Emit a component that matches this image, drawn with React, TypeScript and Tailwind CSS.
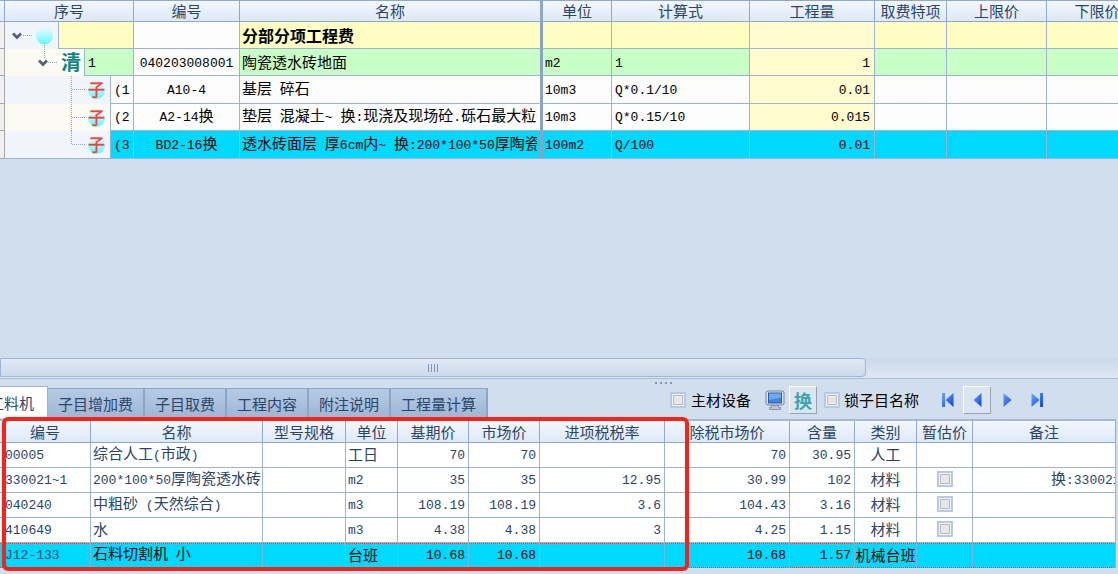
import React from 'react';

// ASCII runs are set in a narrower mono face so they stay half the width of the Chinese glyphs
const Txt: React.FC<{ children: string }> = ({ children }) => (
  <>
    {children.split(/([\x20-\x7e]+)/).map((part, i) =>
      i % 2 ? (
        <span key={i} className="font-['Liberation_Mono',monospace] text-[13px]">{part}</span>
      ) : (
        part
      )
    )}
  </>
);

const line = 'border-[#9db3d3]';
const headCell =
  'border-r border-b border-[#8ea9cb] bg-linear-to-b from-[#f3f7fd] to-[#dde9f7] p-0 text-center font-normal text-[#2b4568] overflow-hidden';

const items = [
  { level: 0, no: '', code: '', name: '分部分项工程费', unit: '', formula: '', qty: '' },
  { level: 1, no: '1', code: '040203008001', name: '陶瓷透水砖地面', unit: 'm2', formula: '1', qty: '1' },
  { level: 2, no: '(1', code: 'A10-4', name: '基层 碎石', unit: '10m3', formula: 'Q*0.1/10', qty: '0.01' },
  { level: 2, no: '(2', code: 'A2-14换', name: '垫层 混凝土~ 换:现浇及现场砼.砾石最大粒径', unit: '10m3', formula: 'Q*0.15/10', qty: '0.015' },
  { level: 2, no: '(3', code: 'BD2-16换', name: '透水砖面层 厚6cm内~ 换:200*100*50厚陶瓷透', unit: '100m2', formula: 'Q/100', qty: '0.01', selected: true },
];

const Chevron: React.FC<{ x: number }> = ({ x }) => (
  <path d={`M${x} 11.5l4 4 4-4`} fill="none" stroke="#52617d" strokeWidth="2.8" />
);

const TreeNode: React.FC<{ level: number; last: boolean }> = ({ level, last }) => {
  if (level === 0) {
    return (
      <svg width="53" height="27" className="block overflow-visible">
        <defs>
          <linearGradient id="ball" x1="0" y1="0" x2="0" y2="1">
            <stop offset="0" stopColor="#e9fcff" />
            <stop offset="0.45" stopColor="#adfbff" />
            <stop offset="1" stopColor="#5ff6fb" />
          </linearGradient>
        </defs>
        <Chevron x={8} />
        <path d="M18 13.5h10" stroke="#8fa3c2" strokeDasharray="1 1" />
        <circle cx="39.5" cy="14" r="8.5" fill="url(#ball)" />
      </svg>
    );
  }
  if (level === 1) {
    return (
      <svg width="79" height="27" className="block overflow-visible">
        <path d="M39.5 -4v14M43 13.5h10" stroke="#8fa3c2" strokeDasharray="1 1" fill="none" />
        <Chevron x={34} />
        <text x="56" y="21" fontSize="20" fontWeight="bold" fill="#0b8585" fontFamily="'Noto Sans CJK SC', sans-serif">清</text>
      </svg>
    );
  }
  return (
    <svg width="105" height="27" className="block overflow-visible">
      <path d={last ? 'M66.5 0v13.5M67 13.5h13' : 'M66.5 0v27M67 13.5h13'} stroke="#8fa3c2" strokeDasharray="1 1" fill="none" />
      <circle cx="91.5" cy="14.5" r="8.5" fill="url(#ball)" />
      <text x="83" y="20" fontSize="17" fill="#f5403a" stroke="#f5403a" strokeWidth="0.4" fontFamily="'Noto Sans CJK SC', sans-serif">子</text>
    </svg>
  );
};

const rowColor = (item: (typeof items)[number]) => {
  if (item.selected) return 'bg-[#00d9ff]';
  if (item.level === 0) return 'bg-[#fffec2]';
  if (item.level === 1) return 'bg-[#c9ffc6]';
  return 'bg-[#fcfcfc]';
};

const ItemTable: React.FC = () => (
  <table className="h-[158px] w-full min-w-[1148px] table-fixed border-separate border-spacing-0 whitespace-pre text-black">
    <colgroup>
      <col className="w-[5px]" />
      <col className="w-[54px]" />
      <col className="w-[26px]" />
      <col className="w-[26px]" />
      <col className="w-[23px]" />
      <col className="w-[106px]" />
      <col className="w-[303px]" />
      <col className="w-[69px]" />
      <col className="w-[138px]" />
      <col className="w-[125px]" />
      <col className="w-[72px]" />
      <col className="w-[100px]" />
      <col />
    </colgroup>
    <thead>
      <tr className="h-[21px]">
        <th className={headCell}></th>
        <th colSpan={4} className={headCell}>序号</th>
        <th className={headCell}>编号</th>
        <th className={`${headCell} border-r-[3px]`}>名称</th>
        <th className={headCell}>单位</th>
        <th className={headCell}>计算式</th>
        <th className={headCell}>工程量</th>
        <th className={headCell}>取费特项</th>
        <th className={headCell}>上限价</th>
        <th className={headCell}>下限价</th>
      </tr>
    </thead>
    <tbody>
      {items.map((item, index) => {
        const bg = rowColor(item);
        const last = index === items.length - 1;
        const cell = `border-r border-b ${line} p-0 overflow-hidden`;
        return (
          <tr key={index}>
            <td className="border-r border-b border-[#a8a8a8] bg-[#f0f0f0] p-0"></td>
            <td
              colSpan={item.level + 1}
              className={`border-r p-0 ${line} ${last ? 'border-b' : ''} ${index % 2 ? 'bg-[#fcfbf3]' : 'bg-[#f1f5fb]'}`}
            >
              <TreeNode level={item.level} last={last} />
            </td>
            <td colSpan={3 - item.level} className={`${cell} ${bg} pl-[3px]`}><Txt>{item.no}</Txt></td>
            <td className={`${cell} text-center ${item.selected ? bg : 'bg-[#fcfcfc]'}`}><Txt>{item.code}</Txt></td>
            <td className={`${cell} ${bg} border-r-[3px] border-r-[#8aa2c3] pr-[3px] pl-0.5 ${item.level === 0 ? 'text-[16px] font-bold' : ''}`}>
              <div className="overflow-hidden"><Txt>{item.name}</Txt></div>
            </td>
            <td className={`${cell} ${bg} pl-0.5`}><Txt>{item.unit}</Txt></td>
            <td className={`${cell} ${bg} pl-[3px]`}><Txt>{item.formula}</Txt></td>
            <td className={`${cell} pr-1 text-right ${item.selected ? bg : 'bg-[#fffdd0]'}`}><Txt>{item.qty}</Txt></td>
            <td className={`${cell} ${bg}`}></td>
            <td className={`${cell} ${bg}`}></td>
            <td className={`${cell} ${bg}`}></td>
          </tr>
        );
      })}
    </tbody>
  </table>
);

const tabs = ['子目增加费', '子目取费', '工程内容', '附注说明', '工程量计算'];

const checkbox =
  'size-4 shrink-0 appearance-none border-2 border-[#b4cae8] bg-[#e6e7e8] shadow-[inset_0_0_0_1px_#f4f4f4,inset_0_0_0_2px_#b9bbbf]';
const raised = 'flex size-7 items-center justify-center border border-t-white border-l-white border-r-[#98a4b5] border-b-[#98a4b5] bg-[#dbe5f1]';

const BlueGradient: React.FC = () => (
  <svg width="0" height="0" className="absolute">
    <defs>
      <linearGradient id="blue" x1="0" y1="0" x2="1" y2="1">
        <stop offset="0" stopColor="#6ea6ff" />
        <stop offset="1" stopColor="#0b45d8" />
      </linearGradient>
    </defs>
  </svg>
);

const Toolbar: React.FC = () => (
  <div className="ml-[182px] flex h-7 shrink-0 items-center text-black">
    <BlueGradient />
    <label className="flex items-center gap-[5px]">
      <input type="checkbox" className={checkbox} />
      主材设备
    </label>
    <button aria-label="显示" className="ml-3 mr-0.5 flex w-6 justify-center">
      <svg width="20" height="20" viewBox="0 0 20 20">
        <rect x="1" y="1" width="18" height="14" rx="2" fill="#dfe3ea" stroke="#7b8698" />
        <rect x="3.5" y="3" width="13" height="10" fill="#3f86e0" stroke="#2c58a8" />
        <path d="M4 3.5h12v4L4 10z" fill="#8fc2f7" opacity="0.6" />
        <path d="M6.500 15.500h7v2h2v2h-11v-2h2z" fill="#bcc3cf" stroke="#7b8698" strokeWidth="0.8" />
      </svg>
    </button>
    <button className={`${raised} text-[18px] font-bold text-[#3aa5ae]`}>换</button>
    <label className="ml-[7px] flex items-center gap-1">
      <input type="checkbox" className={checkbox} />
      锁子目名称
    </label>
    <div className="ml-[14px] flex items-center">
      <button aria-label="第一条" className="flex size-7 items-center justify-center">
        <svg width="13" height="16"><path d="M1 1h3v14H1zM12.500 1v14L4.500 8z" fill="url(#blue)" /></svg>
      </button>
      <button aria-label="上一条" className={`${raised} ml-0.5`}>
        <svg width="9" height="14"><path d="M8.500 0v14L0.500 7z" fill="url(#blue)" /></svg>
      </button>
      <button aria-label="下一条" className="ml-0.5 flex size-7 items-center justify-center">
        <svg width="9" height="14"><path d="M0.500 0v14L8.500 7z" fill="url(#blue)" /></svg>
      </button>
      <button aria-label="最后一条" className="ml-0.5 flex size-7 items-center justify-center">
        <svg width="13" height="16"><path d="M9 1h3v14H9zM0.500 1v14L8.500 8z" fill="url(#blue)" /></svg>
      </button>
    </div>
  </div>
);

const materials = [
  { code: '00005', name: '综合人工(市政)', unit: '工日', base: '70', market: '70', tax: '', net: '70', amount: '30.95', kind: '人工', note: '' },
  { code: '330021~1', name: '200*100*50厚陶瓷透水砖', unit: 'm2', base: '35', market: '35', tax: '12.95', net: '30.99', amount: '102', kind: '材料', estimate: true, note: '换:330021' },
  { code: '040240', name: '中粗砂 (天然综合)', unit: 'm3', base: '108.19', market: '108.19', tax: '3.6', net: '104.43', amount: '3.16', kind: '材料', estimate: true, note: '' },
  { code: '410649', name: '水', unit: 'm3', base: '4.38', market: '4.38', tax: '3', net: '4.25', amount: '1.15', kind: '材料', estimate: true, note: '' },
  { code: 'J12-133', name: '石料切割机 小', unit: '台班', base: '10.68', market: '10.68', tax: '', net: '10.68', amount: '1.57', kind: '机械台班', note: '', selected: true },
];

// focused row: cyan with a dotted red edge above and below
const focused =
  '[background:repeating-linear-gradient(90deg,#e8402f_0_1px,#7fb4d6_1px_2px)_top/100%_1px_no-repeat,repeating-linear-gradient(90deg,#e8402f_0_1px,#7fb4d6_1px_2px)_bottom/100%_1px_no-repeat,#00d9ff]';

const MaterialTable: React.FC = () => (
  <table className="w-full table-fixed border-separate border-spacing-0 whitespace-pre border-t-2 border-[#a3b8d2] text-[#2b4568]">
    <colgroup>
      <col className="w-[91px]" />
      <col className="w-[172px]" />
      <col className="w-[83px]" />
      <col className="w-[52px]" />
      <col className="w-[71px]" />
      <col className="w-[71px]" />
      <col className="w-[125px]" />
      <col className="w-[125px]" />
      <col className="w-[65px]" />
      <col className="w-[62px]" />
      <col className="w-[56px]" />
      <col />
    </colgroup>
    <thead>
      <tr className="h-[22px]">
        {['编号', '名称', '型号规格', '单位', '基期价', '市场价', '进项税税率', '除税市场价', '含量', '类别', '暂估价', '备注'].map((title) => (
          <th key={title} className={headCell}>{title}</th>
        ))}
      </tr>
    </thead>
    <tbody className="leading-[18px]">
      {materials.map((m) => {
        const cell = m.selected
          ? `h-[25px] overflow-hidden border-r border-[#7fb4d6] p-0 pb-0.5 text-black ${focused}`
          : 'h-[25px] overflow-hidden border-r border-b border-[#9db3d3] bg-white p-0 pb-0.5';
        return (
          <tr key={m.code}>
            <td className={`${cell} pl-[5px]`}>
              <span className="text-[#2b4568]"><Txt>{m.code}</Txt></span>
            </td>
            <td className={`${cell} pl-0.5`}><Txt>{m.name}</Txt></td>
            <td className={cell}></td>
            <td className={`${cell} pl-0.5`}><Txt>{m.unit}</Txt></td>
            <td className={`${cell} pr-[3px] text-right`}><Txt>{m.base}</Txt></td>
            <td className={`${cell} pr-[3px] text-right`}><Txt>{m.market}</Txt></td>
            <td className={`${cell} pr-[3px] text-right`}><Txt>{m.tax}</Txt></td>
            <td className={`${cell} pr-[3px] text-right`}><Txt>{m.net}</Txt></td>
            <td className={`${cell} pr-[3px] text-right`}><Txt>{m.amount}</Txt></td>
            <td className={`${cell} text-center`}>{m.kind}</td>
            <td className={cell}>
              {m.estimate && <input type="checkbox" aria-label="暂估价" className={`${checkbox} mx-auto block`} />}
            </td>
            <td className={`${cell} pl-[78px]`}><Txt>{m.note}</Txt></td>
          </tr>
        );
      })}
    </tbody>
  </table>
);

const App: React.FC = () => {
  return (
    <div className="flex min-h-screen flex-col overflow-hidden bg-[#d1deee] font-['Noto_Sans_CJK_SC',sans-serif] text-[15px] leading-5">
      <div className="flex-1 overflow-hidden border-t border-[#8ea9cb]">
        <ItemTable />
      </div>

      <div className="flex h-[21px] border-b border-[#a9bdd8] bg-linear-to-b from-[#cbd9ea] to-[#dde8f3]">
        <div className="flex h-[19px] w-[77.5%] items-center justify-center gap-0.5 rounded-r-sm border border-[#9fb5d3] bg-linear-to-b from-[#e1eaf5] to-[#ccdaeb]">
          {[0, 1, 2, 3].map((n) => (
            <span key={n} className="h-2 w-px bg-[#8197b8]"></span>
          ))}
        </div>
      </div>

      <div className="flex h-[7px] items-center gap-[3px] pl-[655px]">
        {[0, 1, 2, 3].map((n) => (
          <span key={n} className="size-[2px] bg-[#7f96b8]"></span>
        ))}
      </div>

      <div className="flex h-8 items-start whitespace-nowrap text-[#2b4568]">
        <div className="flex h-full items-end">
          <button className="-ml-[22px] h-full w-[70px] shrink-0 border-t border-r border-[#9db3d3] bg-white pr-0.5">工料机</button>
          {tabs.map((tab) => (
            <button
              key={tab}
              className="h-[30px] shrink-0 border-t border-r-2 border-[#8ba5c7] bg-linear-to-b from-[#b5cae4] to-[#9fb7d5] px-2.5"
            >
              {tab}
            </button>
          ))}
        </div>
        <Toolbar />
      </div>

      <div className="relative pt-px pr-0.5 pb-1.5">
        <MaterialTable />
        <div className="pointer-events-none absolute -top-px bottom-[3px] left-0.5 w-[687px] rounded-md border-4 border-[#fb2117]"></div>
      </div>
    </div>
  );
};

export default App;
